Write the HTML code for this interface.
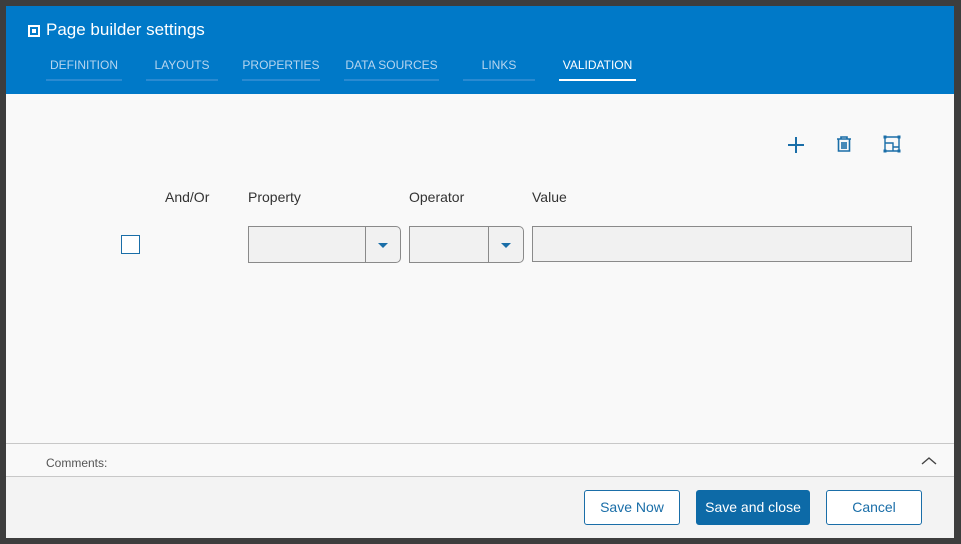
<!DOCTYPE html>
<html><head><style>
body{margin:0;width:961px;height:544px;background:#3d3d3d;overflow:hidden;font-family:"Liberation Sans",sans-serif;position:relative}
.dlg{position:absolute;left:6px;top:6px;width:948px;height:531px;background:#f9f9f9}
.hdr{position:absolute;left:0;top:0;width:948px;height:88px;background:#0079c8}
.title{position:absolute;left:40px;top:14px;color:#fff;font-size:17px}
.ticon{position:absolute;left:22px;top:19px;width:8px;height:8px;border:2px solid #fff;background:#0079c8}
.ticon:after{content:"";position:absolute;left:2px;top:2px;width:4px;height:4px;background:#fff}
.tab{position:absolute;top:52px;height:21px;border-bottom:2px solid #2a8ad1;color:#b6d5ef;font-size:12px;text-align:center}
.tab.a{color:#fff;border-bottom-color:#fff}
.lbl{position:absolute;top:183px;font-size:14px;color:#333}
.sel{position:absolute;top:220px;height:37px;border:1px solid #8a8a8a;border-radius:0 5px 5px 0;background:#f1f1f1;box-sizing:border-box}
.sel .b{position:absolute;right:0;top:0;width:34px;height:35px;border-left:1px solid #8a8a8a}
.sel .b:after{content:"";position:absolute;left:12px;top:16px;border-left:5px solid transparent;border-right:5px solid transparent;border-top:5px solid #1a6ea8}
.btn{position:absolute;top:484px;height:35px;box-sizing:border-box;border:1px solid #1a6ea8;border-radius:3px;background:#fff;color:#1a6ea8;font-size:14px;text-align:center;line-height:33px}
</style></head><body>
<div class="dlg">
<div class="hdr">
<div class="ticon"></div>
<div class="title">Page builder settings</div>
<div class="tab" style="left:40px;width:76px">DEFINITION</div>
<div class="tab" style="left:140px;width:72px">LAYOUTS</div>
<div class="tab" style="left:236px;width:78px">PROPERTIES</div>
<div class="tab" style="left:338px;width:95px">DATA SOURCES</div>
<div class="tab" style="left:457px;width:72px">LINKS</div>
<div class="tab a" style="left:553px;width:77px">VALIDATION</div>
</div>
<svg style="position:absolute;left:780px;top:129px" width="20" height="20"><path d="M10 2V18M2 10H18" stroke="#1a6ea8" stroke-width="2"/></svg>
<svg style="position:absolute;left:829px;top:128px" width="18" height="20"><path d="M2 5H16M6 5V3H12V5M3.5 5.5V17H14.5V5.5M7 8V15M9 8V15M11 8V15" stroke="#1a6ea8" stroke-width="1.6" fill="none"/></svg>
<svg style="position:absolute;left:876px;top:128px" width="20" height="20"><path d="M3 3H17V17H3ZM3 9H11V17M11 9V13H17" stroke="#1a6ea8" stroke-width="1.4" fill="none"/><rect x="1.5" y="1.5" width="3" height="3" fill="#1a6ea8"/><rect x="15.5" y="1.5" width="3" height="3" fill="#1a6ea8"/><rect x="1.5" y="15.5" width="3" height="3" fill="#1a6ea8"/><rect x="15.5" y="15.5" width="3" height="3" fill="#1a6ea8"/></svg>
<div class="lbl" style="left:159px">And/Or</div>
<div class="lbl" style="left:242px">Property</div>
<div class="lbl" style="left:403px">Operator</div>
<div class="lbl" style="left:526px">Value</div>
<div style="position:absolute;left:115px;top:229px;width:19px;height:19px;border:1px solid #1a6ea8;box-sizing:border-box;background:#fff"></div>
<div class="sel" style="left:242px;width:153px"><div class="b"></div></div>
<div class="sel" style="left:403px;width:115px"><div class="b"></div></div>
<div style="position:absolute;left:526px;top:220px;width:380px;height:36px;border:1px solid #8a8a8a;background:#f1f1f1;box-sizing:border-box"></div>
<div style="position:absolute;left:0;top:437px;width:948px;border-top:1px solid #c8c8c8"></div>
<div style="position:absolute;left:40px;top:450px;font-size:12px;color:#555">Comments:</div>
<svg style="position:absolute;left:914px;top:449px" width="18" height="12"><path d="M2 9L9 3L16 9" stroke="#444" stroke-width="1.4" fill="none"/></svg>
<div style="position:absolute;left:0;top:470px;width:948px;height:61px;background:#f3f3f3;border-top:1px solid #c8c8c8"></div>
<div class="btn" style="left:578px;width:96px">Save Now</div>
<div class="btn" style="left:690px;width:114px;background:#0d6aa7;color:#fff;border-color:#0d6aa7">Save and close</div>
<div class="btn" style="left:820px;width:96px">Cancel</div>
</div>
</body></html>
